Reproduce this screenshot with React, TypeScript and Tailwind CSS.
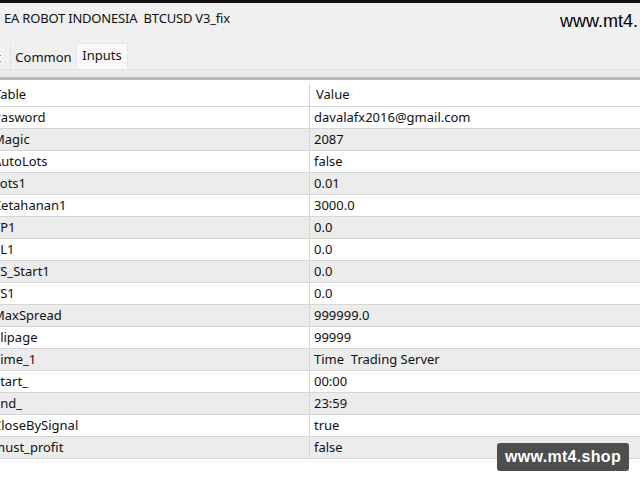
import React from "react";

const rows: [string, string][] = [
  ["Pasword", "davalafx2016@gmail.com"],
  ["Magic", "2087"],
  ["AutoLots", "false"],
  ["Lots1", "0.01"],
  ["Ketahanan1", "3000.0"],
  ["TP1", "0.0"],
  ["SL1", "0.0"],
  ["TS_Start1", "0.0"],
  ["TS1", "0.0"],
  ["MaxSpread", "999999.0"],
  ["Slipage", "99999"],
  ["Time_1", "Time  Trading Server"],
  ["Start_", "00:00"],
  ["End_", "23:59"],
  ["CloseBySignal", "true"],
  ["must_profit", "false"],
];

export default function App() {
  return (
    <div
      className="relative w-[640px] h-[480px] overflow-hidden bg-white text-[#111]"
      style={{ fontFamily: '"Noto Sans", "Open Sans", sans-serif' }}
    >
      <div className="h-[3px] bg-[#111]" />
      <div className="h-[32px] bg-[#f0f0f0] flex items-center justify-between">
        <span className="pl-[4px] text-[13px] whitespace-pre tracking-[-0.2px]">EA ROBOT INDONESIA  BTCUSD V3_fix</span>
        <span
          className="text-[18px] text-black whitespace-nowrap mr-[-40px] w-[120px] pt-[4px]"
          style={{ fontFamily: '"Liberation Sans", Arial, sans-serif' }}
        >
          www.mt4.
        </span>
      </div>
      <div className="h-[42px] bg-[#f0f0f0] flex flex-col">
        <div className="h-[9px]" />
        <div className="flex h-[26px] border-b border-[#e3e3e3]">
          <div className="w-[10px] flex items-center text-[13px] overflow-hidden pt-[2px]">
            <span className="ml-[-4px]">t</span>
          </div>
          <div className="w-[66px] flex items-center justify-center pt-[2px] text-[13px] bg-[#f0f0f0] border-l border-[#e0e0e0]">Common</div>
          <div className="w-[52px] flex items-start justify-center pt-[2px] text-[13px] bg-[#f9f9f9] border-x border-t border-[#e6e6e6] mt-[-1px]">Inputs</div>
        </div>
        <div className="flex-1 bg-[#ececec]" />
      </div>
      <div className="h-[3px] bg-[#b9b9b9]" />
      <div className="flex h-[26px] items-center bg-white pt-[3px]">
        <div className="w-[310px] border-r border-[#d4d4d4] h-full flex items-center overflow-hidden">
          <span className="text-[13px] ml-[-6px]">Table</span>
        </div>
        <div className="pl-[6px] text-[13px]">Value</div>
      </div>
      {rows.map(([k, v], i) => (
        <div
          key={k}
          className={
            i % 2 === 1
              ? "flex h-[22px] items-center bg-[#ececec] border-t border-[#d6d6d6]"
              : "flex h-[22px] items-center bg-white border-t border-[#d6d6d6]"
          }
        >
          <div className="w-[310px] border-r border-[#d4d4d4] h-full flex items-center overflow-hidden">
            <span className="text-[13px] ml-[-7px] whitespace-pre">{k}</span>
          </div>
          <div className="pl-[4px] text-[13px] whitespace-pre">{v}</div>
        </div>
      ))}
      <div className="border-t border-[#d6d6d6]" />
      <div
        className="absolute left-[497px] top-[443px] w-[132px] h-[28px] rounded-[3px] bg-[#4e4e4e] text-white flex items-center justify-center text-[16px] font-bold tracking-[0.3px]"
        style={{ fontFamily: '"Liberation Sans", Arial, sans-serif' }}
      >
        www.mt4.shop
      </div>
    </div>
  );
}
